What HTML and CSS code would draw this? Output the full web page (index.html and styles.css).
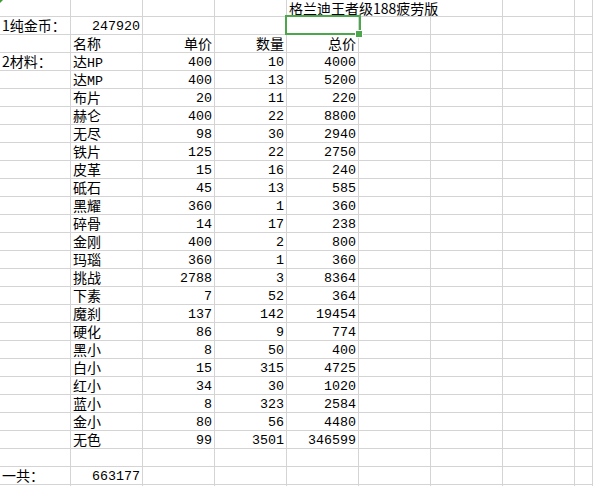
FILE: index.html
```html
<!DOCTYPE html>
<html lang="zh-CN">
<head>
<meta charset="utf-8">
<title>格兰迪王者级188疲劳版</title>
<link rel="stylesheet" href="styles.css">
</head>
<body>
<div class="sheet">
  <div class="c first a1"><span class="flag"></span></div><div class="c first"></div><div class="c first"></div><div class="c first"></div><div class="c first title">格兰迪王者级188疲劳版</div><div class="c first"></div><div class="c first"></div>

  <div class="c">1纯金币：</div><div class="c r n">247920</div><div class="c"></div><div class="c"></div><div class="c selcell"><span class="sel"></span><span class="handle"></span></div><div class="c"></div><div class="c"></div><div class="c"></div><div class="c"></div>

  <div class="c"></div><div class="c">名称</div><div class="c r">单价</div><div class="c r">数量</div><div class="c r">总价</div><div class="c"></div><div class="c"></div><div class="c"></div><div class="c"></div>

  <div class="c">2材料：</div><div class="c">达<span class="m">HP</span></div><div class="c r n">400</div><div class="c r n">10</div><div class="c r n">4000</div><div class="c"></div><div class="c"></div><div class="c"></div><div class="c"></div>
  <div class="c"></div><div class="c">达<span class="m">MP</span></div><div class="c r n">400</div><div class="c r n">13</div><div class="c r n">5200</div><div class="c"></div><div class="c"></div><div class="c"></div><div class="c"></div>
  <div class="c"></div><div class="c">布片</div><div class="c r n">20</div><div class="c r n">11</div><div class="c r n">220</div><div class="c"></div><div class="c"></div><div class="c"></div><div class="c"></div>
  <div class="c"></div><div class="c">赫仑</div><div class="c r n">400</div><div class="c r n">22</div><div class="c r n">8800</div><div class="c"></div><div class="c"></div><div class="c"></div><div class="c"></div>
  <div class="c"></div><div class="c">无尽</div><div class="c r n">98</div><div class="c r n">30</div><div class="c r n">2940</div><div class="c"></div><div class="c"></div><div class="c"></div><div class="c"></div>
  <div class="c"></div><div class="c">铁片</div><div class="c r n">125</div><div class="c r n">22</div><div class="c r n">2750</div><div class="c"></div><div class="c"></div><div class="c"></div><div class="c"></div>
  <div class="c"></div><div class="c">皮革</div><div class="c r n">15</div><div class="c r n">16</div><div class="c r n">240</div><div class="c"></div><div class="c"></div><div class="c"></div><div class="c"></div>
  <div class="c"></div><div class="c">砥石</div><div class="c r n">45</div><div class="c r n">13</div><div class="c r n">585</div><div class="c"></div><div class="c"></div><div class="c"></div><div class="c"></div>
  <div class="c"></div><div class="c">黑耀</div><div class="c r n">360</div><div class="c r n">1</div><div class="c r n">360</div><div class="c"></div><div class="c"></div><div class="c"></div><div class="c"></div>
  <div class="c"></div><div class="c">碎骨</div><div class="c r n">14</div><div class="c r n">17</div><div class="c r n">238</div><div class="c"></div><div class="c"></div><div class="c"></div><div class="c"></div>
  <div class="c"></div><div class="c">金刚</div><div class="c r n">400</div><div class="c r n">2</div><div class="c r n">800</div><div class="c"></div><div class="c"></div><div class="c"></div><div class="c"></div>
  <div class="c"></div><div class="c">玛瑙</div><div class="c r n">360</div><div class="c r n">1</div><div class="c r n">360</div><div class="c"></div><div class="c"></div><div class="c"></div><div class="c"></div>
  <div class="c"></div><div class="c">挑战</div><div class="c r n">2788</div><div class="c r n">3</div><div class="c r n">8364</div><div class="c"></div><div class="c"></div><div class="c"></div><div class="c"></div>
  <div class="c"></div><div class="c">下素</div><div class="c r n">7</div><div class="c r n">52</div><div class="c r n">364</div><div class="c"></div><div class="c"></div><div class="c"></div><div class="c"></div>
  <div class="c"></div><div class="c">魔刹</div><div class="c r n">137</div><div class="c r n">142</div><div class="c r n">19454</div><div class="c"></div><div class="c"></div><div class="c"></div><div class="c"></div>
  <div class="c"></div><div class="c">硬化</div><div class="c r n">86</div><div class="c r n">9</div><div class="c r n">774</div><div class="c"></div><div class="c"></div><div class="c"></div><div class="c"></div>
  <div class="c"></div><div class="c">黑小</div><div class="c r n">8</div><div class="c r n">50</div><div class="c r n">400</div><div class="c"></div><div class="c"></div><div class="c"></div><div class="c"></div>
  <div class="c"></div><div class="c">白小</div><div class="c r n">15</div><div class="c r n">315</div><div class="c r n">4725</div><div class="c"></div><div class="c"></div><div class="c"></div><div class="c"></div>
  <div class="c"></div><div class="c">红小</div><div class="c r n">34</div><div class="c r n">30</div><div class="c r n">1020</div><div class="c"></div><div class="c"></div><div class="c"></div><div class="c"></div>
  <div class="c"></div><div class="c">蓝小</div><div class="c r n">8</div><div class="c r n">323</div><div class="c r n">2584</div><div class="c"></div><div class="c"></div><div class="c"></div><div class="c"></div>
  <div class="c"></div><div class="c">金小</div><div class="c r n">80</div><div class="c r n">56</div><div class="c r n">4480</div><div class="c"></div><div class="c"></div><div class="c"></div><div class="c"></div>
  <div class="c"></div><div class="c">无色</div><div class="c r n">99</div><div class="c r n">3501</div><div class="c r n">346599</div><div class="c"></div><div class="c"></div><div class="c"></div><div class="c"></div>

  <div class="c"></div><div class="c"></div><div class="c"></div><div class="c"></div><div class="c"></div><div class="c"></div><div class="c"></div><div class="c"></div><div class="c"></div>
  <div class="c">一共：</div><div class="c r n">663177</div><div class="c"></div><div class="c"></div><div class="c"></div><div class="c"></div><div class="c"></div><div class="c"></div><div class="c"></div>
  <div class="c"></div><div class="c"></div><div class="c"></div><div class="c"></div><div class="c"></div><div class="c"></div><div class="c"></div><div class="c"></div><div class="c"></div>
</div>
</body>
</html>
```

FILE: styles.css
```css
html, body {
  margin: 0;
  padding: 0;
  background: #ffffff;
  overflow: hidden;
}

.sheet {
  display: grid;
  grid-template-columns: 71px repeat(7, 72px) 18px;
  grid-template-rows: 17px;
  grid-auto-rows: 18px;
  width: 593px;
  height: 486px;
  overflow: hidden;
  font-family: "Noto Sans CJK SC", "Liberation Mono", sans-serif;
  font-size: 14px;
  color: #000000;
}

.c {
  box-sizing: border-box;
  border-right: 1px solid #d4d4d4;
  border-bottom: 1px solid #d4d4d4;
  padding: 0 2px;
  line-height: 17px;
  white-space: nowrap;
}

.c.first {
  line-height: 16px;
}

.c.title {
  grid-column: span 3;
}

.r {
  text-align: right;
}

.n {
  font-family: "Liberation Mono", "Noto Sans CJK SC", monospace;
  font-size: 13.33px;
  padding-top: 2px;
  line-height: 15px;
}

.m {
  font-family: "Liberation Mono", monospace;
  font-size: 13.33px;
}

.a1 {
  position: relative;
}

.flag {
  position: absolute;
  left: 0;
  top: 0;
  width: 0;
  height: 0;
  border-top: 3px solid #3f9c35;
  border-right: 3px solid transparent;
}

.selcell {
  position: relative;
}

.sel {
  position: absolute;
  left: -2px;
  top: -2px;
  width: 76px;
  height: 20px;
  box-sizing: border-box;
  border: 2px solid #4ca64c;
}

.handle {
  position: absolute;
  left: 68px;
  top: 13px;
  width: 6px;
  height: 6px;
  background: #4ca64c;
  border: 1px solid #ffffff;
}
```
